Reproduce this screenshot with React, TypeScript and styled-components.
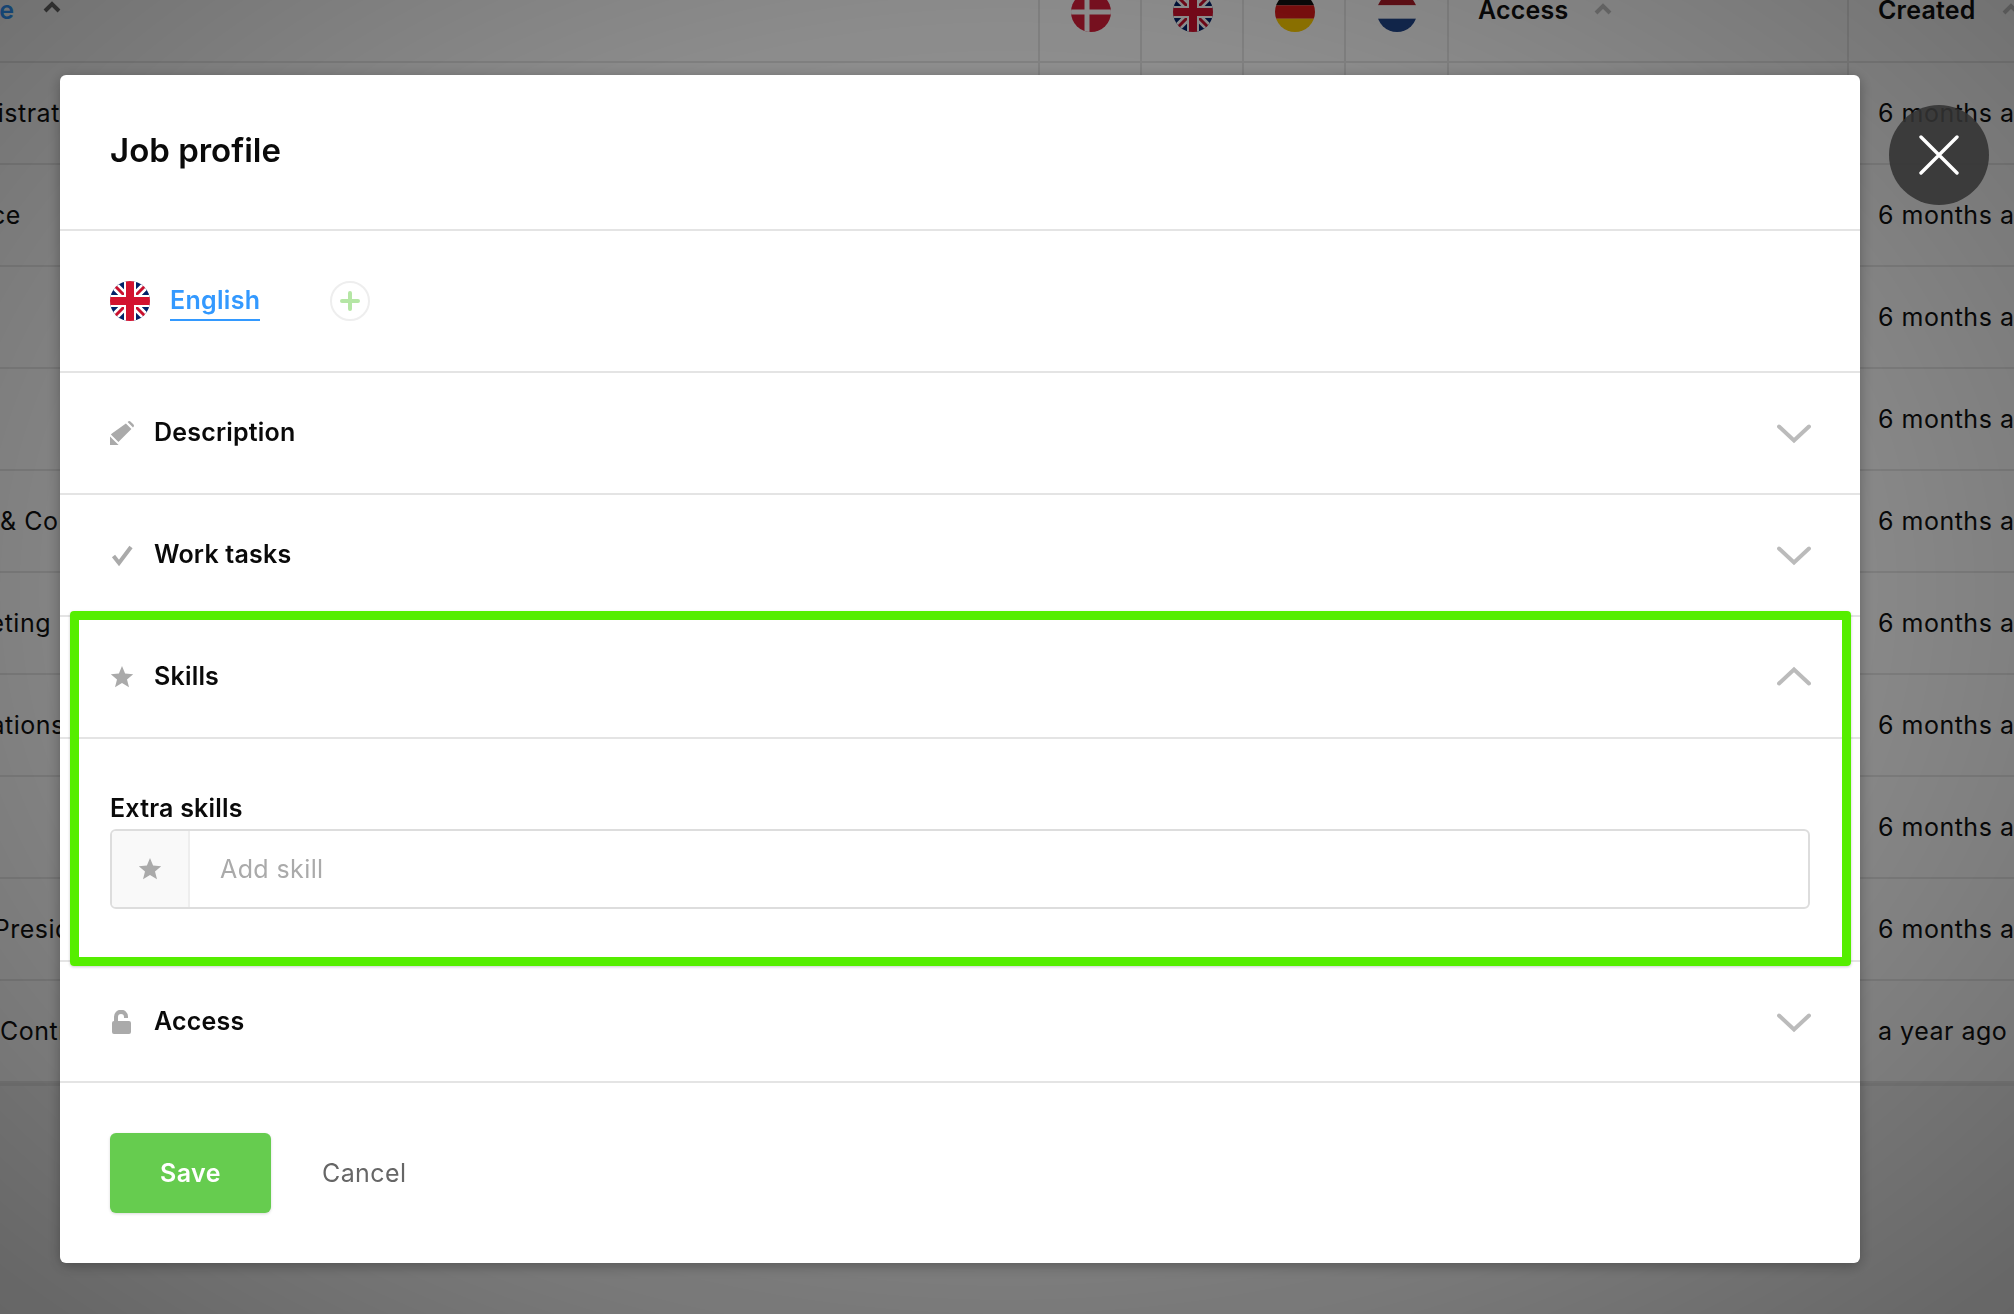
import React from "react";
import styled, { createGlobalStyle } from "styled-components";

const FONT = `"Inter", "Lato", "Liberation Sans", sans-serif`;

const GlobalStyle = createGlobalStyle`
  html, body {
    margin: 0;
    padding: 0;
    height: 1314px;
    overflow: hidden;
    background: #f2f2f2;
    font-family: ${FONT};
    color: #111;
  }
`;

/* table behind the dialog */
const Table = styled.div`
  margin-top: -38px;
  width: 2014px;
  background: #fff;
  border-bottom: 3px solid #e2e2e2;
`;

const TableRow = styled.div<{ $head?: boolean }>`
  display: grid;
  grid-template-columns: 1039px repeat(4, 102px) 400px 1fr;
  height: ${(p) => (p.$head ? "99px" : "100px")};
  border-bottom: 2px solid #e8e8e8;
  font-size: 25px;
  letter-spacing: 0.5px;
  overflow: hidden;
`;

const NameCell = styled.div<{ $shift: number }>`
  display: flex;
  align-items: center;
  margin-left: ${(p) => p.$shift}px;
  white-space: nowrap;
`;

const HeadName = styled.div`
  display: flex;
  align-items: center;
  gap: 28px;
  padding-bottom: 4px;
  margin-left: -58px;
  color: #3399ff;
  font-weight: 600;
`;

const FlagCell = styled.div`
  display: flex;
  align-items: center;
  justify-content: center;
  border-left: 2px solid #e8e8e8;
  margin-left: -1px;
`;

const PlainCell = styled.div`
  display: flex;
  align-items: center;
  gap: 26px;
  padding-left: 29px;
  border-left: 2px solid #e8e8e8;
  white-space: nowrap;
`;

const HeadLabel = styled.span`
  font-weight: 600;
  padding-bottom: 4px;
  letter-spacing: 0.2px;
`;

const SortIcon = styled.svg`
  width: 18px;
  height: 12px;
  margin-bottom: 5px;
  flex: none;
  fill: none;
  stroke-width: 4;
`;

/* dim layer and dialog */
const Overlay = styled.div`
  position: fixed;
  inset: 0;
  background: radial-gradient(ellipse at 50% 45%, rgba(0, 0, 0, 0.4) 0%, rgba(0, 0, 0, 0.45) 55%, rgba(0, 0, 0, 0.58) 100%);
`;

const Modal = styled.div`
  position: fixed;
  left: 60px;
  top: 75px;
  width: 1800px;
  background: #fff;
  border-radius: 6px;
  box-shadow: 0 3px 14px rgba(0, 0, 0, 0.3);
  display: flex;
  flex-direction: column;
`;

const Title = styled.h1`
  margin: 0;
  height: 156px;
  display: flex;
  align-items: center;
  padding: 0 50px 4px;
  box-sizing: border-box;
  border-bottom: 2px solid #e4e4e4;
  font-size: 33px;
  font-weight: 600;
  color: #0a0a0a;
`;

const LanguageBar = styled.div`
  height: 142px;
  box-sizing: border-box;
  padding: 50px 50px 0;
  display: flex;
  align-items: flex-start;
  border-bottom: 2px solid #e4e4e4;
`;

const LanguageLink = styled.a`
  margin-left: 20px;
  height: 38px;
  line-height: 38px;
  border-bottom: 2px solid #3399ff;
  color: #3399ff;
  font-size: 25px;
  font-weight: 600;
  letter-spacing: 0.3px;
`;

const AddLanguage = styled.button`
  margin-left: 70px;
  width: 40px;
  height: 40px;
  padding: 0;
  border-radius: 50%;
  border: 2px solid #eeeeee;
  background: #fff;
  display: flex;
  align-items: center;
  justify-content: center;
`;

const SectionRow = styled.div<{ $height?: number }>`
  height: ${(p) => p.$height ?? 122}px;
  box-sizing: border-box;
  padding: 0 50px;
  display: flex;
  align-items: center;
  border-bottom: 2px solid #e4e4e4;
`;

const SectionIcon = styled.svg`
  width: 24px;
  height: 24px;
  fill: #aaaaaa;
  flex: none;
`;

const SectionLabel = styled.span`
  margin-left: 20px;
  flex: 1;
  padding-bottom: 2px;
  font-size: 25px;
  font-weight: 600;
  letter-spacing: 0.2px;
  color: #0a0a0a;
`;

const Chevron = styled.svg`
  width: 34px;
  height: 22px;
  fill: none;
  stroke: #bbbbbb;
  stroke-width: 4;
  stroke-linecap: round;
  stroke-linejoin: miter;
  flex: none;
  margin-right: -1px;
`;

const SkillsBody = styled.div`
  height: 223px;
  box-sizing: border-box;
  padding: 52px 50px 0;
  border-bottom: 2px solid #e4e4e4;
`;

const FieldLabel = styled.label`
  display: block;
  height: 38px;
  line-height: 34px;
  font-size: 25px;
  font-weight: 600;
  letter-spacing: 0.2px;
  color: #0a0a0a;
`;

const InputGroup = styled.div`
  height: 80px;
  box-sizing: border-box;
  border: 2px solid #dddddd;
  border-radius: 6px;
  display: flex;
  overflow: hidden;
`;

const InputAddon = styled.div`
  width: 78px;
  box-sizing: border-box;
  background: #f9f9f9;
  border-right: 2px solid #eeeeee;
  display: flex;
  align-items: center;
  justify-content: center;
`;

const Placeholder = styled.div`
  padding-left: 30px;
  display: flex;
  align-items: center;
  color: #aaaaaa;
  font-size: 25px;
  letter-spacing: 0.4px;
`;

const Footer = styled.div`
  height: 180px;
  box-sizing: border-box;
  padding: 50px 50px 0;
  display: flex;
  align-items: flex-start;
`;

const SaveButton = styled.button`
  width: 161px;
  height: 80px;
  border: none;
  border-radius: 6px;
  background: #66cc4f;
  color: #fff;
  font-family: ${FONT};
  font-size: 25px;
  font-weight: 600;
  letter-spacing: 0.4px;
  box-shadow: 0 1px 3px rgba(0, 0, 0, 0.15);
`;

const CancelLink = styled.a`
  margin-left: 51px;
  line-height: 80px;
  color: #666666;
  font-size: 25px;
  letter-spacing: 0.4px;
`;

const Highlight = styled.div`
  position: fixed;
  left: 70px;
  top: 611px;
  width: 1781px;
  height: 355px;
  box-sizing: border-box;
  border: 9px solid #55ee00;
  border-radius: 4px;
  box-shadow: 0 1px 3px rgba(0, 0, 0, 0.2);
  pointer-events: none;
`;

const CloseButton = styled.button`
  position: fixed;
  left: 1889px;
  top: 105px;
  width: 100px;
  height: 100px;
  padding: 0;
  border: none;
  border-radius: 50%;
  background: rgba(50, 50, 50, 0.88);
  display: flex;
  align-items: center;
  justify-content: center;
`;

const StarPath = "M12 1l3.1 7.6 8.1.6-6.2 5.2 2 7.9L12 18l-7 4.3 2-7.9L.8 9.2l8.1-.6z";

const Star: React.FC = () => (
  <SectionIcon viewBox="0 0 24 24">
    <path d={StarPath} />
  </SectionIcon>
);

const ChevronDown: React.FC = () => (
  <Chevron viewBox="0 0 34 22">
    <path d="M2 4.5L17 18.5L32 4.5" />
  </Chevron>
);

const UkFlag: React.FC<{ id: string }> = ({ id }) => (
  <svg width="40" height="40" viewBox="0 0 40 40">
    <clipPath id={id}>
      <circle cx="20" cy="20" r="20" />
    </clipPath>
    <g clipPath={`url(#${id})`}>
      <rect width="40" height="40" fill="#012169" />
      <path d="M0 0L40 40M40 0L0 40" stroke="#fff" strokeWidth="8" />
      <path d="M0 0L40 40M40 0L0 40" stroke="#c8102e" strokeWidth="3" />
      <path d="M20 0V40M0 20H40" stroke="#fff" strokeWidth="12" />
      <path d="M20 0V40M0 20H40" stroke="#d3122f" strokeWidth="8" />
    </g>
  </svg>
);

const StripeFlag: React.FC<{ id: string; colors: string[] }> = ({ id, colors }) => (
  <svg width="40" height="40" viewBox="0 0 40 40">
    <clipPath id={id}>
      <circle cx="20" cy="20" r="20" />
    </clipPath>
    <g clipPath={`url(#${id})`}>
      {colors.map((c, i) => (
        <rect key={c} y={(i * 40) / 3} width="40" height="13.4" fill={c} />
      ))}
    </g>
  </svg>
);

const DanishFlag: React.FC = () => (
  <svg width="40" height="40" viewBox="0 0 40 40">
    <clipPath id="dk">
      <circle cx="20" cy="20" r="20" />
    </clipPath>
    <g clipPath="url(#dk)">
      <rect width="40" height="40" fill="#d81e3a" />
      <path d="M16 0V40M0 20H40" stroke="#fff" strokeWidth="5" />
    </g>
  </svg>
);

const rows = [
  { name: "Administrative", shift: -80, created: "6 months ago" },
  { name: "Finance", shift: -76, created: "6 months ago" },
  { name: "", shift: 0, created: "6 months ago" },
  { name: "", shift: 0, created: "6 months ago" },
  { name: "& Communication", shift: 0, created: "6 months ago" },
  { name: "Marketing", shift: -72, created: "6 months ago" },
  { name: "Operations", shift: -70, created: "6 months ago" },
  { name: "", shift: 0, created: "6 months ago" },
  { name: "Vice President", shift: -68, created: "6 months ago" },
  { name: "Contracts", shift: 0, created: "a year ago" },
];

const Sort: React.FC<{ color: string }> = ({ color }) => (
  <SortIcon viewBox="0 0 18 12" stroke={color}>
    <path d="M2 10l7-7 7 7" />
  </SortIcon>
);

const App: React.FC = () => {
  return (
    <>
      <GlobalStyle />
      <Table>
        <TableRow $head>
          <NameCell $shift={0}>
            <HeadName>
              Name <Sort color="#666" />
            </HeadName>
          </NameCell>
          <FlagCell>
            <DanishFlag />
          </FlagCell>
          <FlagCell>
            <UkFlag id="uk-head" />
          </FlagCell>
          <FlagCell>
            <StripeFlag id="de" colors={["#111111", "#dd1c1c", "#ffce00"]} />
          </FlagCell>
          <FlagCell>
            <StripeFlag id="nl" colors={["#ae1c28", "#ffffff", "#21468b"]} />
          </FlagCell>
          <PlainCell>
            <HeadLabel>Access</HeadLabel>
            <Sort color="#c4c4c4" />
          </PlainCell>
          <PlainCell>
            <HeadLabel>Created</HeadLabel>
            <Sort color="#c4c4c4" />
          </PlainCell>
        </TableRow>
        {rows.map((r, i) => (
          <TableRow key={i}>
            <NameCell $shift={r.shift}>{r.name}</NameCell>
            <FlagCell />
            <FlagCell />
            <FlagCell />
            <FlagCell />
            <PlainCell />
            <PlainCell>{r.created}</PlainCell>
          </TableRow>
        ))}
      </Table>

      <Overlay />

      <Modal>
        <Title>Job profile</Title>
        <LanguageBar>
          <UkFlag id="uk-lang" />
          <LanguageLink>English</LanguageLink>
          <AddLanguage>
            <svg width="20" height="20" viewBox="0 0 20 20">
              <path d="M10 2V18M2 10H18" stroke="#b5e6a5" strokeWidth="4" strokeLinecap="round" />
            </svg>
          </AddLanguage>
        </LanguageBar>

        <SectionRow>
          <SectionIcon viewBox="0 0 24 24">
            <path d="M17.6 1l.3-.3a2 2 0 0 1 2.8 0l2.6 2.6a2 2 0 0 1 0 2.8l-.3.3zM15.9 2.6l5.5 5.5L8.4 21.1l-7.5-7.5 1-1zM0 15.4L8.6 24H0z" />
          </SectionIcon>
          <SectionLabel>Description</SectionLabel>
          <ChevronDown />
        </SectionRow>
        <SectionRow>
          <SectionIcon viewBox="0 0 24 24">
            <path d="M3.5 13L9 20L21 4" fill="none" stroke="#aaaaaa" strokeWidth="4" />
          </SectionIcon>
          <SectionLabel>Work tasks</SectionLabel>
          <ChevronDown />
        </SectionRow>
        <SectionRow>
          <Star />
          <SectionLabel>Skills</SectionLabel>
          <Chevron viewBox="0 0 34 22">
            <path d="M2 17.5L17 3.5L32 17.5" />
          </Chevron>
        </SectionRow>
        <SkillsBody>
          <FieldLabel>Extra skills</FieldLabel>
          <InputGroup>
            <InputAddon>
              <Star />
            </InputAddon>
            <Placeholder>Add skill</Placeholder>
          </InputGroup>
        </SkillsBody>
        <SectionRow $height={121}>
          <SectionIcon viewBox="0 0 24 24">
            <path d="M4 11V7a7 7 0 0 1 14-.6V8h-4V7a3 3 0 0 0-6 0v4h11a2 2 0 0 1 2 2v9a2 2 0 0 1-2 2H4a2 2 0 0 1-2-2v-9a2 2 0 0 1 2-2z" />
          </SectionIcon>
          <SectionLabel>Access</SectionLabel>
          <ChevronDown />
        </SectionRow>
        <Footer>
          <SaveButton>Save</SaveButton>
          <CancelLink>Cancel</CancelLink>
        </Footer>
      </Modal>

      <Highlight />

      <CloseButton>
        <svg width="40" height="40" viewBox="0 0 40 40">
          <path d="M2 2L38 38M38 2L2 38" stroke="#fff" strokeWidth="3.4" strokeLinecap="round" />
        </svg>
      </CloseButton>
    </>
  );
};

export default App;
